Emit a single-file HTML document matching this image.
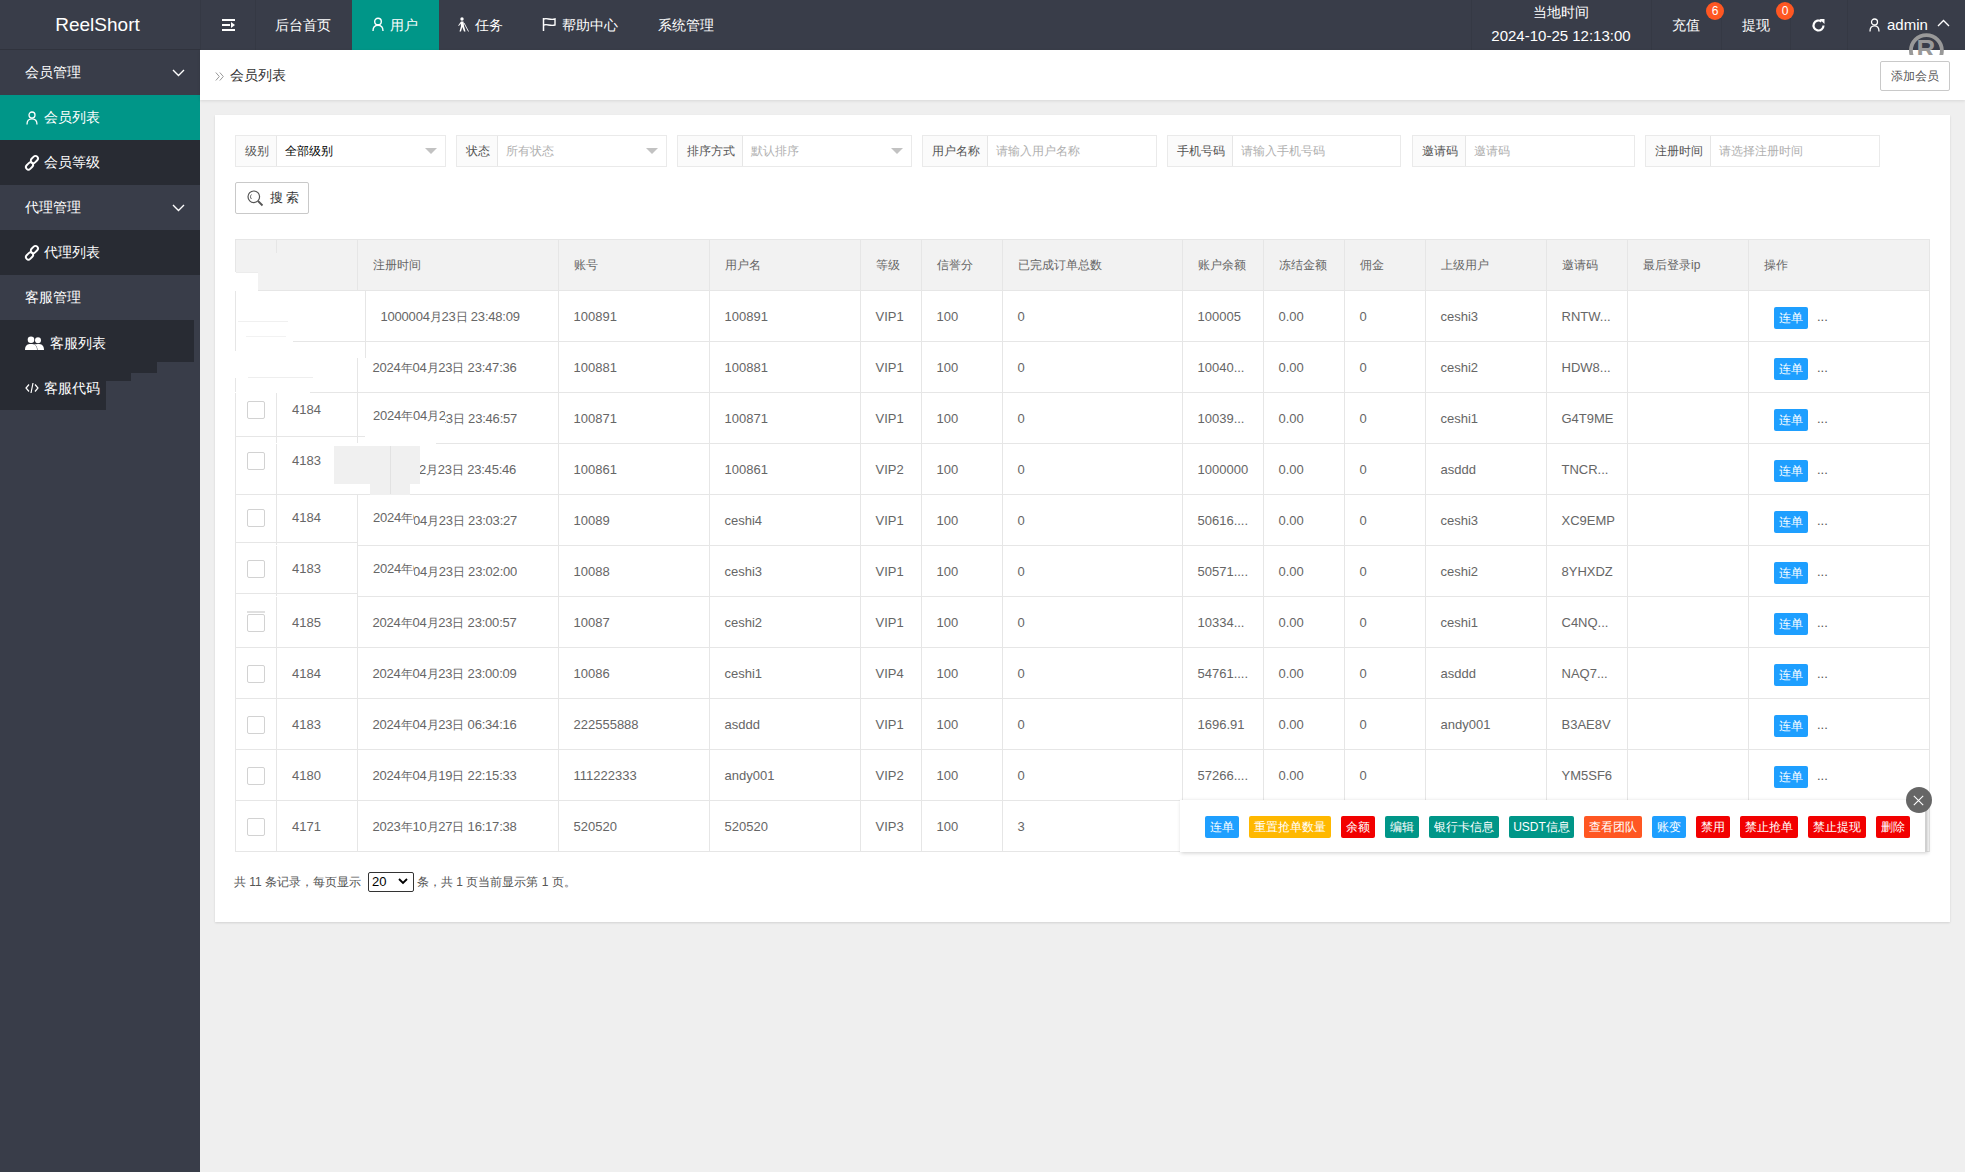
<!DOCTYPE html><html><head><meta charset="utf-8"><style>
*{margin:0;padding:0;box-sizing:border-box}
html,body{width:1965px;height:1172px;overflow:hidden;background:#efefef;font-family:"Liberation Sans",sans-serif;font-size:14px;color:#666}
div,span{position:absolute}
.t{white-space:nowrap;line-height:16px}
.si{left:0;width:200px;height:45px}
.st{left:25px;top:14px;color:#fff;font-size:14px;white-space:nowrap;line-height:16px}
.hn{top:17px;color:#fff;font-size:14px;white-space:nowrap;line-height:16px}
.vl{width:1px;background:#e6e6e6}
.hl{height:1px;background:#e6e6e6}
.fl{top:135px;height:32px;border:1px solid #eaeaea;background:#fff}
.lb{left:0;top:0;height:30px;background:#fbfbfb;border-right:1px solid #e6e6e6}
.lt{top:7px;color:#555;font-size:12px;white-space:nowrap;line-height:16px}
.ph{top:7px;color:#b0b0b0;font-size:12px;white-space:nowrap;line-height:16px}
.tri{top:12px;width:0;height:0;border-left:6px solid transparent;border-right:6px solid transparent;border-top:6px solid #c2c2c2}
.th{color:#666;font-size:12px;white-space:nowrap;line-height:16px}
.td{color:#666;font-size:13px;white-space:nowrap;line-height:16px}
i{font-style:normal;font-size:12px}
.dt{letter-spacing:-0.2px}
.cb{width:18px;height:18px;border:1px solid #d2d2d2;border-radius:2px;background:#fff}
.b{height:22px;line-height:22px;color:#fff;font-size:12px;text-align:center;border-radius:2px;white-space:nowrap}
</style></head><body>
<div style="left:0;top:0;width:1965px;height:50px;background:#393d49"></div>
<div class="t" style="left:0;top:15px;width:195px;text-align:center;font-size:19px;line-height:20px;color:#fff">ReelShort</div>
<div style="left:200px;top:0;width:1px;height:50px;background:#353944"></div>
<div style="left:255px;top:0;width:1px;height:50px;background:#353944"></div>
<div style="left:222px;top:19px;width:13px;height:2px;background:#fff"></div>
<div style="left:222px;top:24px;width:8px;height:2px;background:#fff"></div>
<div style="left:222px;top:29px;width:13px;height:2px;background:#fff"></div>
<div style="left:231px;top:22px;width:0;height:0;border-top:3px solid transparent;border-bottom:3px solid transparent;border-left:4px solid #fff"></div>
<div class="hn" style="left:275px">后台首页</div>
<div style="left:352px;top:0;width:87px;height:50px;background:#009688"></div>
<svg style="position:absolute;left:372px;top:17px" width="12" height="15" viewBox="0 0 12 15"><circle cx="6" cy="4.5" r="3.3" fill="none" stroke="#fff" stroke-width="1.4"/><path d="M1 14 C1 9.5 3 8.2 6 8.2 C9 8.2 11 9.5 11 14" fill="none" stroke="#fff" stroke-width="1.4"/></svg>
<div class="hn" style="left:390px">用户</div>
<svg style="position:absolute;left:457px;top:17px" width="12" height="15" viewBox="0 0 12 15"><circle cx="5" cy="2" r="1.7" fill="#fff"/><path d="M4 4.5 L6.5 4.5 L7 9 L8.5 14.5 L7 14.5 L5.3 10 L4 14.5 L2.5 14.5 L4 9 L3.5 6.5 L2 9 L1.2 8.5 Z" fill="#fff"/><path d="M7 6 L11.5 14.5" stroke="#fff" stroke-width="0.9"/></svg>
<div class="hn" style="left:475px">任务</div>
<svg style="position:absolute;left:542px;top:17px" width="15" height="14" viewBox="0 0 15 14"><path d="M1.5 1 L1.5 14" stroke="#fff" stroke-width="1.5"/><path d="M2 2 C5 0.5 8 3.5 13 2 L13 8 C8 9.5 5 6.5 2 8" fill="none" stroke="#fff" stroke-width="1.4"/></svg>
<div class="hn" style="left:562px">帮助中心</div>
<div class="hn" style="left:658px">系统管理</div>
<div style="left:1471px;top:0;width:1px;height:50px;background:#353944"></div>
<div style="left:1651px;top:0;width:1px;height:50px;background:#353944"></div>
<div style="left:1721px;top:0;width:1px;height:50px;background:#353944"></div>
<div style="left:1790px;top:0;width:1px;height:50px;background:#353944"></div>
<div style="left:1847px;top:0;width:1px;height:50px;background:#353944"></div>
<div class="t" style="left:1471px;top:4px;width:180px;text-align:center;color:#fff;font-size:14px">当地时间</div>
<div class="t" style="left:1471px;top:27px;width:180px;text-align:center;color:#fff;font-size:15px;line-height:17px">2024-10-25 12:13:00</div>
<div class="hn" style="left:1672px">充值</div>
<div class="t" style="left:1706px;top:2px;width:18px;height:18px;border-radius:9px;background:#ff5722;color:#fff;font-size:12px;line-height:18px;text-align:center">6</div>
<div class="hn" style="left:1742px">提现</div>
<div class="t" style="left:1776px;top:2px;width:18px;height:18px;border-radius:9px;background:#ff5722;color:#fff;font-size:12px;line-height:18px;text-align:center">0</div>
<svg style="position:absolute;left:1811px;top:18px" width="15" height="15" viewBox="0 0 15 15"><path d="M12.5 7.5 A5 5 0 1 1 10.5 3.5" fill="none" stroke="#fff" stroke-width="2.2"/><path d="M8.5 1 L13.5 1 L13.5 6 Z" fill="#fff"/></svg>
<svg style="position:absolute;left:1869px;top:18px" width="11" height="14" viewBox="0 0 11 14"><circle cx="5.5" cy="4" r="3" fill="none" stroke="#fff" stroke-width="1.3"/><path d="M1 13.5 C1 9 2.8 7.8 5.5 7.8 C8.2 7.8 10 9 10 13.5" fill="none" stroke="#fff" stroke-width="1.3"/></svg>
<div class="t" style="left:1887px;top:16px;color:#fff;font-size:15px;line-height:17px">admin</div>
<svg style="position:absolute;left:1937px;top:19px" width="13" height="8" viewBox="0 0 13 8"><path d="M1 7 L6.5 1.5 L12 7" fill="none" stroke="#fff" stroke-width="1.4"/></svg>
<div style="left:0;top:50px;width:200px;height:1122px;background:#393d49"></div>
<div class="si" style="top:50px;"></div>
<div class="st" style="left:25px;top:64px">会员管理</div>
<svg style="position:absolute;left:172px;top:69px" width="13" height="8" viewBox="0 0 13 8"><path d="M1 1 L6.5 6.5 L12 1" fill="none" stroke="#fff" stroke-width="1.4"/></svg>
<div style="left:0;top:49px;width:200px;height:1px;background:#30333d"></div>
<div class="si" style="top:95px;background:#009688;"></div>
<svg style="position:absolute;left:26px;top:111px" width="12" height="14" viewBox="0 0 12 14"><circle cx="6" cy="4" r="3" fill="none" stroke="#fff" stroke-width="1.3"/><path d="M1 13.5 C1 9 3 7.8 6 7.8 C9 7.8 11 9 11 13.5" fill="none" stroke="#fff" stroke-width="1.3"/></svg>
<div class="st" style="left:44px;top:109px">会员列表</div>
<div class="si" style="top:140px;background:#282b33;"></div>
<svg style="position:absolute;left:25px;top:155px;overflow:visible" width="14" height="14" viewBox="0 0 14 14"><rect x="6.9" y="0.5" width="5" height="8" rx="2.5" transform="rotate(45 9.4 4.5)" fill="none" stroke="#fff" stroke-width="1.9"/><rect x="2" y="7" width="5" height="8" rx="2.5" transform="rotate(45 4.5 11)" fill="none" stroke="#fff" stroke-width="1.9"/></svg>
<div class="st" style="left:44px;top:154px">会员等级</div>
<div class="si" style="top:185px;"></div>
<div class="st" style="left:25px;top:199px">代理管理</div>
<svg style="position:absolute;left:172px;top:204px" width="13" height="8" viewBox="0 0 13 8"><path d="M1 1 L6.5 6.5 L12 1" fill="none" stroke="#fff" stroke-width="1.4"/></svg>
<div class="si" style="top:230px;background:#282b33;"></div>
<svg style="position:absolute;left:25px;top:245px;overflow:visible" width="14" height="14" viewBox="0 0 14 14"><rect x="6.9" y="0.5" width="5" height="8" rx="2.5" transform="rotate(45 9.4 4.5)" fill="none" stroke="#fff" stroke-width="1.9"/><rect x="2" y="7" width="5" height="8" rx="2.5" transform="rotate(45 4.5 11)" fill="none" stroke="#fff" stroke-width="1.9"/></svg>
<div class="st" style="left:44px;top:244px">代理列表</div>
<div class="si" style="top:275px;"></div>
<div class="st" style="left:25px;top:289px">客服管理</div>
<div style="left:0;top:320px;width:194px;height:42px;background:#282b33"></div>
<div style="left:0;top:362px;width:157px;height:11px;background:#282b33"></div>
<div style="left:0;top:373px;width:131px;height:8px;background:#282b33"></div>
<div style="left:0;top:381px;width:106px;height:29px;background:#282b33"></div>
<svg style="position:absolute;left:25px;top:336px" width="19" height="14" viewBox="0 0 19 14"><circle cx="6" cy="3.8" r="3.3" fill="#fff"/><path d="M0 14 C0 9 2.5 8 6 8 C9.5 8 12 9 12 14 Z" fill="#fff"/><circle cx="13" cy="4.2" r="3" fill="#fff"/><path d="M9 8.6 C10 8.2 11.5 8 13 8 C16.5 8 19 9 19 14 L12.5 14 C12.5 11 11.5 9.5 9 8.6 Z" fill="#fff"/></svg>
<div class="st" style="left:50px;top:335px">客服列表</div>
<svg style="position:absolute;left:25px;top:382px" width="14" height="12" viewBox="0 0 14 12"><path d="M4 2.5 L1 6 L4 9.5 M10 2.5 L13 6 L10 9.5 M8 1 L6 11" fill="none" stroke="#fff" stroke-width="1.2"/></svg>
<div class="st" style="left:44px;top:380px">客服代码</div>
<div style="left:200px;top:50px;width:1765px;height:50px;background:#fff;box-shadow:0 1px 3px rgba(0,0,0,.1)"></div>
<svg style="position:absolute;left:215px;top:72px" width="10" height="9" viewBox="0 0 10 9"><path d="M0.8 0.5 L4.3 4.5 L0.8 8.5 M4.8 0.5 L8.3 4.5 L4.8 8.5" fill="none" stroke="#999" stroke-width="1"/></svg>
<div class="t" style="left:230px;top:67px;color:#333;font-size:14px">会员列表</div>
<div class="t" style="left:1880px;top:61px;width:70px;height:30px;border:1px solid #c9c9c9;border-radius:2px;background:#fff;color:#555;font-size:12px;line-height:28px;text-align:center">添加会员</div>
<svg style="position:absolute;left:1907px;top:32px" width="40" height="23" viewBox="0 0 40 23"><circle cx="19.4" cy="18.6" r="15.5" fill="none" stroke="#999" stroke-width="3.8"/><text x="19" y="26" font-size="26" font-family="Liberation Sans" font-weight="bold" fill="#999" text-anchor="middle">R</text></svg>
<div style="left:215px;top:115px;width:1735px;height:807px;background:#fff;box-shadow:0 1px 2px rgba(0,0,0,.12)"></div>
<div class="fl" style="left:235px;width:211px"><div class="lb" style="width:41px"></div><div class="lt" style="left:0;width:41px;text-align:center">级别</div><div class="ph" style="left:49px;color:#000">全部级别</div><div class="tri" style="left:189px"></div></div>
<div class="fl" style="left:456px;width:211px"><div class="lb" style="width:41px"></div><div class="lt" style="left:0;width:41px;text-align:center">状态</div><div class="ph" style="left:49px;">所有状态</div><div class="tri" style="left:189px"></div></div>
<div class="fl" style="left:677px;width:235px"><div class="lb" style="width:65px"></div><div class="lt" style="left:0;width:65px;text-align:center">排序方式</div><div class="ph" style="left:73px;">默认排序</div><div class="tri" style="left:213px"></div></div>
<div class="fl" style="left:922px;width:235px"><div class="lb" style="width:65px"></div><div class="lt" style="left:0;width:65px;text-align:center">用户名称</div><div class="ph" style="left:73px;">请输入用户名称</div></div>
<div class="fl" style="left:1167px;width:234px"><div class="lb" style="width:65px"></div><div class="lt" style="left:0;width:65px;text-align:center">手机号码</div><div class="ph" style="left:73px;">请输入手机号码</div></div>
<div class="fl" style="left:1412px;width:223px"><div class="lb" style="width:53px"></div><div class="lt" style="left:0;width:53px;text-align:center">邀请码</div><div class="ph" style="left:61px;">邀请码</div></div>
<div class="fl" style="left:1645px;width:235px"><div class="lb" style="width:65px"></div><div class="lt" style="left:0;width:65px;text-align:center">注册时间</div><div class="ph" style="left:73px;">请选择注册时间</div></div>
<div style="left:235px;top:182px;width:74px;height:32px;border:1px solid #c9c9c9;border-radius:2px;background:#fff"></div>
<svg style="position:absolute;left:247px;top:190px" width="17" height="17" viewBox="0 0 17 17"><circle cx="6.8" cy="6.8" r="5.8" fill="none" stroke="#555" stroke-width="1.2"/><path d="M11 11 L15.5 15.5" stroke="#555" stroke-width="1.8"/><path d="M4.5 4.5 A3 3 0 0 0 4.5 9" fill="none" stroke="#555" stroke-width="0.9"/></svg>
<div class="t" style="left:270px;top:190px;color:#333;font-size:13px;letter-spacing:3px">搜索</div>
<div style="left:235px;top:239px;width:1694px;height:51px;background:#f2f2f2"></div>
<div class="hl" style="left:235px;top:239px;width:1694px"></div>
<div class="hl" style="left:235px;top:290px;width:1694px"></div>
<div class="hl" style="left:235px;top:341px;width:1694px"></div>
<div class="hl" style="left:235px;top:392px;width:1694px"></div>
<div class="hl" style="left:235px;top:443px;width:1694px"></div>
<div class="hl" style="left:235px;top:494px;width:1694px"></div>
<div class="hl" style="left:235px;top:545px;width:1694px"></div>
<div class="hl" style="left:235px;top:596px;width:1694px"></div>
<div class="hl" style="left:235px;top:647px;width:1694px"></div>
<div class="hl" style="left:235px;top:698px;width:1694px"></div>
<div class="hl" style="left:235px;top:749px;width:1694px"></div>
<div class="hl" style="left:235px;top:800px;width:1694px"></div>
<div class="hl" style="left:235px;top:851px;width:1694px"></div>
<div class="vl" style="left:235px;top:239px;height:613px"></div>
<div class="vl" style="left:276px;top:239px;height:613px"></div>
<div class="vl" style="left:357px;top:239px;height:613px"></div>
<div class="vl" style="left:558px;top:239px;height:613px"></div>
<div class="vl" style="left:709px;top:239px;height:613px"></div>
<div class="vl" style="left:860px;top:239px;height:613px"></div>
<div class="vl" style="left:921px;top:239px;height:613px"></div>
<div class="vl" style="left:1002px;top:239px;height:613px"></div>
<div class="vl" style="left:1182px;top:239px;height:613px"></div>
<div class="vl" style="left:1263px;top:239px;height:613px"></div>
<div class="vl" style="left:1344px;top:239px;height:613px"></div>
<div class="vl" style="left:1425px;top:239px;height:613px"></div>
<div class="vl" style="left:1546px;top:239px;height:613px"></div>
<div class="vl" style="left:1627px;top:239px;height:613px"></div>
<div class="vl" style="left:1748px;top:239px;height:613px"></div>
<div class="vl" style="left:1929px;top:239px;height:613px"></div>
<div class="th" style="left:373px;top:257px">注册时间</div>
<div class="th" style="left:574px;top:257px">账号</div>
<div class="th" style="left:725px;top:257px">用户名</div>
<div class="th" style="left:876px;top:257px">等级</div>
<div class="th" style="left:937px;top:257px">信誉分</div>
<div class="th" style="left:1018px;top:257px">已完成订单总数</div>
<div class="th" style="left:1198px;top:257px">账户余额</div>
<div class="th" style="left:1279px;top:257px">冻结金额</div>
<div class="th" style="left:1360px;top:257px">佣金</div>
<div class="th" style="left:1441px;top:257px">上级用户</div>
<div class="th" style="left:1562px;top:257px">邀请码</div>
<div class="th" style="left:1643px;top:257px">最后登录ip</div>
<div class="th" style="left:1764px;top:257px">操作</div>
<div class="td dt" style="left:380.5px;top:309px">1000004<i>月</i>23<i>日</i> 23:48:09</div>
<div class="td" style="left:573.5px;top:309px">100891</div>
<div class="td" style="left:724.5px;top:309px">100891</div>
<div class="td" style="left:875.5px;top:309px">VIP1</div>
<div class="td" style="left:936.5px;top:309px">100</div>
<div class="td" style="left:1017.5px;top:309px">0</div>
<div class="td" style="left:1197.5px;top:309px">100005</div>
<div class="td" style="left:1278.5px;top:309px">0.00</div>
<div class="td" style="left:1359.5px;top:309px">0</div>
<div class="td" style="left:1440.5px;top:309px">ceshi3</div>
<div class="td" style="left:1561.5px;top:309px">RNTW...</div>
<div class="b" style="left:1774px;top:307px;width:34px;background:#1e9fff">连单</div>
<div class="td" style="left:1817px;top:309px;color:#555">...</div>
<div class="td dt" style="left:372.5px;top:360px">2024<i>年</i>04<i>月</i>23<i>日</i> 23:47:36</div>
<div class="td" style="left:573.5px;top:360px">100881</div>
<div class="td" style="left:724.5px;top:360px">100881</div>
<div class="td" style="left:875.5px;top:360px">VIP1</div>
<div class="td" style="left:936.5px;top:360px">100</div>
<div class="td" style="left:1017.5px;top:360px">0</div>
<div class="td" style="left:1197.5px;top:360px">10040...</div>
<div class="td" style="left:1278.5px;top:360px">0.00</div>
<div class="td" style="left:1359.5px;top:360px">0</div>
<div class="td" style="left:1440.5px;top:360px">ceshi2</div>
<div class="td" style="left:1561.5px;top:360px">HDW8...</div>
<div class="b" style="left:1774px;top:358px;width:34px;background:#1e9fff">连单</div>
<div class="td" style="left:1817px;top:360px;color:#555">...</div>
<div class="cb" style="left:247px;top:401px"></div>
<div class="td" style="left:292px;top:402px">4184</div>
<div class="td" style="left:573.5px;top:411px">100871</div>
<div class="td" style="left:724.5px;top:411px">100871</div>
<div class="td" style="left:875.5px;top:411px">VIP1</div>
<div class="td" style="left:936.5px;top:411px">100</div>
<div class="td" style="left:1017.5px;top:411px">0</div>
<div class="td" style="left:1197.5px;top:411px">10039...</div>
<div class="td" style="left:1278.5px;top:411px">0.00</div>
<div class="td" style="left:1359.5px;top:411px">0</div>
<div class="td" style="left:1440.5px;top:411px">ceshi1</div>
<div class="td" style="left:1561.5px;top:411px">G4T9ME</div>
<div class="b" style="left:1774px;top:409px;width:34px;background:#1e9fff">连单</div>
<div class="td" style="left:1817px;top:411px;color:#555">...</div>
<div class="cb" style="left:247px;top:452px"></div>
<div class="td" style="left:292px;top:453px">4183</div>
<div class="td" style="left:573.5px;top:462px">100861</div>
<div class="td" style="left:724.5px;top:462px">100861</div>
<div class="td" style="left:875.5px;top:462px">VIP2</div>
<div class="td" style="left:936.5px;top:462px">100</div>
<div class="td" style="left:1017.5px;top:462px">0</div>
<div class="td" style="left:1197.5px;top:462px">1000000</div>
<div class="td" style="left:1278.5px;top:462px">0.00</div>
<div class="td" style="left:1359.5px;top:462px">0</div>
<div class="td" style="left:1440.5px;top:462px">asddd</div>
<div class="td" style="left:1561.5px;top:462px">TNCR...</div>
<div class="b" style="left:1774px;top:460px;width:34px;background:#1e9fff">连单</div>
<div class="td" style="left:1817px;top:462px;color:#555">...</div>
<div class="cb" style="left:247px;top:509px"></div>
<div class="td" style="left:292px;top:510px">4184</div>
<div style="left:373px;top:513px;width:160px;height:18px;overflow:hidden"><div class="td dt" style="left:0;top:0;clip-path:inset(0 0 0 41px)">2024<i>年</i>04<i>月</i>23<i>日</i> 23:03:27</div></div>
<div style="left:373px;top:510px;width:41px;height:18px;overflow:hidden;background:#fff"><div class="td dt" style="left:0;top:0">2024<i>年</i>04<i>月</i>23<i>日</i> 23:03:27</div></div>
<div class="td" style="left:573.5px;top:513px">10089</div>
<div class="td" style="left:724.5px;top:513px">ceshi4</div>
<div class="td" style="left:875.5px;top:513px">VIP1</div>
<div class="td" style="left:936.5px;top:513px">100</div>
<div class="td" style="left:1017.5px;top:513px">0</div>
<div class="td" style="left:1197.5px;top:513px">50616....</div>
<div class="td" style="left:1278.5px;top:513px">0.00</div>
<div class="td" style="left:1359.5px;top:513px">0</div>
<div class="td" style="left:1440.5px;top:513px">ceshi3</div>
<div class="td" style="left:1561.5px;top:513px">XC9EMP</div>
<div class="b" style="left:1774px;top:511px;width:34px;background:#1e9fff">连单</div>
<div class="td" style="left:1817px;top:513px;color:#555">...</div>
<div class="cb" style="left:247px;top:560px"></div>
<div class="td" style="left:292px;top:561px">4183</div>
<div style="left:373px;top:564px;width:160px;height:18px;overflow:hidden"><div class="td dt" style="left:0;top:0;clip-path:inset(0 0 0 41px)">2024<i>年</i>04<i>月</i>23<i>日</i> 23:02:00</div></div>
<div style="left:373px;top:561px;width:41px;height:18px;overflow:hidden;background:#fff"><div class="td dt" style="left:0;top:0">2024<i>年</i>04<i>月</i>23<i>日</i> 23:02:00</div></div>
<div class="td" style="left:573.5px;top:564px">10088</div>
<div class="td" style="left:724.5px;top:564px">ceshi3</div>
<div class="td" style="left:875.5px;top:564px">VIP1</div>
<div class="td" style="left:936.5px;top:564px">100</div>
<div class="td" style="left:1017.5px;top:564px">0</div>
<div class="td" style="left:1197.5px;top:564px">50571....</div>
<div class="td" style="left:1278.5px;top:564px">0.00</div>
<div class="td" style="left:1359.5px;top:564px">0</div>
<div class="td" style="left:1440.5px;top:564px">ceshi2</div>
<div class="td" style="left:1561.5px;top:564px">8YHXDZ</div>
<div class="b" style="left:1774px;top:562px;width:34px;background:#1e9fff">连单</div>
<div class="td" style="left:1817px;top:564px;color:#555">...</div>
<div class="cb" style="left:247px;top:614px"></div>
<div class="td" style="left:292px;top:615px">4185</div>
<div class="td dt" style="left:372.5px;top:615px">2024<i>年</i>04<i>月</i>23<i>日</i> 23:00:57</div>
<div class="td" style="left:573.5px;top:615px">10087</div>
<div class="td" style="left:724.5px;top:615px">ceshi2</div>
<div class="td" style="left:875.5px;top:615px">VIP1</div>
<div class="td" style="left:936.5px;top:615px">100</div>
<div class="td" style="left:1017.5px;top:615px">0</div>
<div class="td" style="left:1197.5px;top:615px">10334...</div>
<div class="td" style="left:1278.5px;top:615px">0.00</div>
<div class="td" style="left:1359.5px;top:615px">0</div>
<div class="td" style="left:1440.5px;top:615px">ceshi1</div>
<div class="td" style="left:1561.5px;top:615px">C4NQ...</div>
<div class="b" style="left:1774px;top:613px;width:34px;background:#1e9fff">连单</div>
<div class="td" style="left:1817px;top:615px;color:#555">...</div>
<div class="cb" style="left:247px;top:665px"></div>
<div class="td" style="left:292px;top:666px">4184</div>
<div class="td dt" style="left:372.5px;top:666px">2024<i>年</i>04<i>月</i>23<i>日</i> 23:00:09</div>
<div class="td" style="left:573.5px;top:666px">10086</div>
<div class="td" style="left:724.5px;top:666px">ceshi1</div>
<div class="td" style="left:875.5px;top:666px">VIP4</div>
<div class="td" style="left:936.5px;top:666px">100</div>
<div class="td" style="left:1017.5px;top:666px">0</div>
<div class="td" style="left:1197.5px;top:666px">54761....</div>
<div class="td" style="left:1278.5px;top:666px">0.00</div>
<div class="td" style="left:1359.5px;top:666px">0</div>
<div class="td" style="left:1440.5px;top:666px">asddd</div>
<div class="td" style="left:1561.5px;top:666px">NAQ7...</div>
<div class="b" style="left:1774px;top:664px;width:34px;background:#1e9fff">连单</div>
<div class="td" style="left:1817px;top:666px;color:#555">...</div>
<div class="cb" style="left:247px;top:716px"></div>
<div class="td" style="left:292px;top:717px">4183</div>
<div class="td dt" style="left:372.5px;top:717px">2024<i>年</i>04<i>月</i>23<i>日</i> 06:34:16</div>
<div class="td" style="left:573.5px;top:717px">222555888</div>
<div class="td" style="left:724.5px;top:717px">asddd</div>
<div class="td" style="left:875.5px;top:717px">VIP1</div>
<div class="td" style="left:936.5px;top:717px">100</div>
<div class="td" style="left:1017.5px;top:717px">0</div>
<div class="td" style="left:1197.5px;top:717px">1696.91</div>
<div class="td" style="left:1278.5px;top:717px">0.00</div>
<div class="td" style="left:1359.5px;top:717px">0</div>
<div class="td" style="left:1440.5px;top:717px">andy001</div>
<div class="td" style="left:1561.5px;top:717px">B3AE8V</div>
<div class="b" style="left:1774px;top:715px;width:34px;background:#1e9fff">连单</div>
<div class="td" style="left:1817px;top:717px;color:#555">...</div>
<div class="cb" style="left:247px;top:767px"></div>
<div class="td" style="left:292px;top:768px">4180</div>
<div class="td dt" style="left:372.5px;top:768px">2024<i>年</i>04<i>月</i>19<i>日</i> 22:15:33</div>
<div class="td" style="left:573.5px;top:768px">111222333</div>
<div class="td" style="left:724.5px;top:768px">andy001</div>
<div class="td" style="left:875.5px;top:768px">VIP2</div>
<div class="td" style="left:936.5px;top:768px">100</div>
<div class="td" style="left:1017.5px;top:768px">0</div>
<div class="td" style="left:1197.5px;top:768px">57266....</div>
<div class="td" style="left:1278.5px;top:768px">0.00</div>
<div class="td" style="left:1359.5px;top:768px">0</div>
<div class="td" style="left:1561.5px;top:768px">YM5SF6</div>
<div class="b" style="left:1774px;top:766px;width:34px;background:#1e9fff">连单</div>
<div class="td" style="left:1817px;top:768px;color:#555">...</div>
<div class="cb" style="left:247px;top:818px"></div>
<div class="td" style="left:292px;top:819px">4171</div>
<div class="td dt" style="left:372.5px;top:819px">2023<i>年</i>10<i>月</i>27<i>日</i> 16:17:38</div>
<div class="td" style="left:573.5px;top:819px">520520</div>
<div class="td" style="left:724.5px;top:819px">520520</div>
<div class="td" style="left:875.5px;top:819px">VIP3</div>
<div class="td" style="left:936.5px;top:819px">100</div>
<div class="td" style="left:1017.5px;top:819px">3</div>
<div style="left:276px;top:253px;width:1px;height:37px;background:#f2f2f2"></div>
<div style="left:235px;top:272px;width:23px;height:19px;background:#fff"></div>
<div style="left:236px;top:272px;width:22px;height:1px;background:#ececec"></div>
<div style="left:235px;top:291px;width:123px;height:101px;background:#fff"></div>
<div style="left:235px;top:291px;width:1px;height:60px;background:#e6e6e6"></div>
<div style="left:235px;top:378px;width:1px;height:14px;background:#e6e6e6"></div>
<div style="left:293px;top:341px;width:65px;height:1px;background:#e6e6e6"></div>
<div style="left:365px;top:291px;width:1px;height:67px;background:#e6e6e6"></div>
<div style="left:357px;top:358px;width:1px;height:34px;background:#e6e6e6"></div>
<div style="left:235px;top:392px;width:75px;height:1px;background:#fff"></div>
<div style="left:238px;top:321px;width:50px;height:1px;background:#f0f0f0"></div>
<div style="left:246px;top:336px;width:40px;height:1px;background:#f2f2f2"></div>
<div style="left:248px;top:377px;width:65px;height:1px;background:#eeeeee"></div>
<div style="left:373px;top:411px;width:160px;height:18px;overflow:hidden"><div class="td dt" style="left:0;top:0;clip-path:inset(0 0 0 72px)">2024<i>年</i>04<i>月</i>23<i>日</i> 23:46:57</div></div>
<div style="left:373px;top:408px;width:72px;height:18px;overflow:hidden"><div class="td dt" style="left:0;top:0">2024<i>年</i>04<i>月</i>23<i>日</i> 23:46:57</div></div>
<div style="left:236px;top:443px;width:200px;height:1px;background:#fff"></div>
<div style="left:235px;top:436px;width:130px;height:1px;background:#e6e6e6"></div>
<div style="left:357px;top:444px;width:1px;height:50px;background:#fff"></div>
<div class="td dt" style="left:419px;top:462px">2<i>月</i>23<i>日</i> 23:45:46</div>
<div style="left:334px;top:446px;width:86px;height:38px;background:#f0f0f0"></div>
<div style="left:370px;top:484px;width:40px;height:11px;background:#f0f0f0"></div>
<div style="left:390px;top:446px;width:1px;height:48px;background:#e2e2e2"></div>
<div style="left:236px;top:545px;width:121px;height:1px;background:#fff"></div>
<div style="left:235px;top:542px;width:122px;height:1px;background:#e6e6e6"></div>
<div style="left:236px;top:596px;width:121px;height:1px;background:#fff"></div>
<div style="left:235px;top:593px;width:122px;height:1px;background:#e6e6e6"></div>
<div style="left:247px;top:611px;width:18px;height:2px;background:#e0e0e0"></div>
<div style="left:1180px;top:800px;width:747px;height:52px;background:#fff;border-right:2px solid #d0d0d0;box-shadow:1px 1px 4px rgba(0,0,0,.2)"></div>
<div class="b" style="left:1205px;top:816px;width:34px;background:#1e9fff">连单</div>
<div class="b" style="left:1249px;top:816px;width:82px;background:#ffb800">重置抢单数量</div>
<div class="b" style="left:1341px;top:816px;width:34px;background:#f20000">余额</div>
<div class="b" style="left:1385px;top:816px;width:34px;background:#009688">编辑</div>
<div class="b" style="left:1429px;top:816px;width:70px;background:#009688">银行卡信息</div>
<div class="b" style="left:1509px;top:816px;width:65px;background:#009688">USDT信息</div>
<div class="b" style="left:1584px;top:816px;width:58px;background:#ff5722">查看团队</div>
<div class="b" style="left:1652px;top:816px;width:34px;background:#1e9fff">账变</div>
<div class="b" style="left:1696px;top:816px;width:34px;background:#f20000">禁用</div>
<div class="b" style="left:1740px;top:816px;width:58px;background:#f20000">禁止抢单</div>
<div class="b" style="left:1808px;top:816px;width:58px;background:#f20000">禁止提现</div>
<div class="b" style="left:1876px;top:816px;width:34px;background:#f20000">删除</div>
<div style="left:1906px;top:787px;width:26px;height:26px;border-radius:50%;background:#666"></div>
<svg style="position:absolute;left:1912px;top:794px" width="13" height="13" viewBox="0 0 13 13"><path d="M1.8 1.8 L11.2 11.2 M11.2 1.8 L1.8 11.2" stroke="#fff" stroke-width="1.1"/></svg>
<div class="t" style="left:234px;top:874px;color:#555;font-size:12px">共 11 条记录，每页显示</div>
<div style="left:368px;top:872px;width:46px;height:20px;border:1px solid #333;border-radius:2px;background:#fff"></div>
<div class="t" style="left:372px;top:874px;color:#000;font-size:13px">20</div>
<svg style="position:absolute;left:398px;top:878px" width="10" height="7" viewBox="0 0 10 7"><path d="M1 1 L5 5 L9 1" fill="none" stroke="#000" stroke-width="1.8"/></svg>
<div class="t" style="left:417px;top:874px;color:#555;font-size:12px">条，共 1 页当前显示第 1 页。</div>
</body></html>
